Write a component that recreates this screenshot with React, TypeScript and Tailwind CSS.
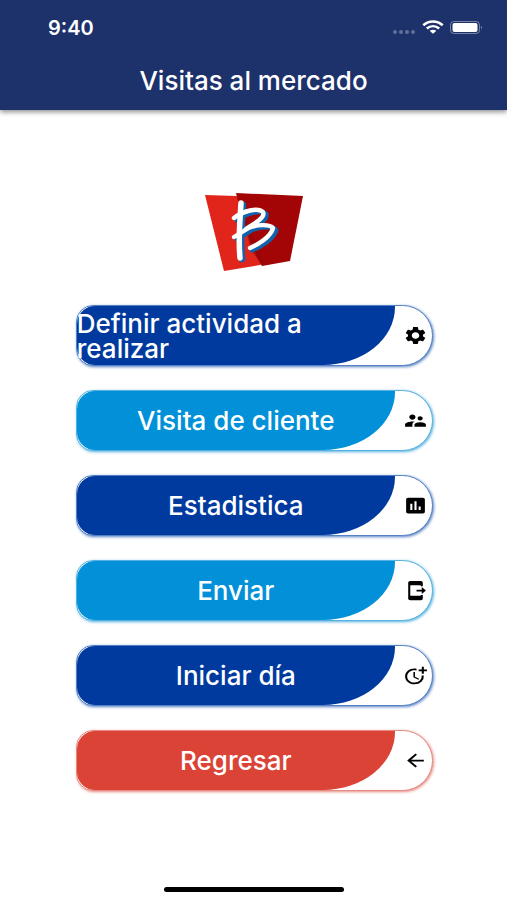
import React from 'react';
import {
  MdArrowBack,
  MdMoreTime,
  MdPoll,
  MdSendToMobile,
  MdSettings,
  MdSupervisorAccount,
} from 'react-icons/md';
import type { IconType } from 'react-icons';
import clsx from 'clsx';

type Tone = 'navy' | 'sky' | 'red';

interface MenuItem {
  label: string;
  icon: IconType;
  tone: Tone;
}

const items: MenuItem[] = [
  { label: 'Definir actividad a realizar', icon: MdSettings, tone: 'navy' },
  { label: 'Visita de cliente', icon: MdSupervisorAccount, tone: 'sky' },
  { label: 'Estadistica', icon: MdPoll, tone: 'navy' },
  { label: 'Enviar', icon: MdSendToMobile, tone: 'sky' },
  { label: 'Iniciar día', icon: MdMoreTime, tone: 'navy' },
  { label: 'Regresar', icon: MdArrowBack, tone: 'red' },
];

const outline: Record<Tone, string> = {
  navy: 'border-[#5580c4] shadow-[1px_1px_3px_#5580c4]',
  sky: 'border-[#55b1df] shadow-[1px_1px_3px_#55b1df]',
  red: 'border-[#e68a82] shadow-[1px_1px_3px_#e68a82]',
};

const fill: Record<Tone, string> = {
  navy: 'bg-[#003a9f]',
  sky: 'bg-[#0291d8]',
  red: 'bg-[#da4336]',
};

const StatusBar: React.FC = () => (
  <div className="flex h-14 items-center justify-between pl-12 pr-6">
    <span className="text-xl font-semibold">9:40</span>
    <svg width="92" height="16" viewBox="0 0 92 16" fill="none">
      {/* no signal */}
      <g fill="#fff" opacity="0.3">
        <circle cx="4" cy="12" r="2" />
        <circle cx="10" cy="12" r="2" />
        <circle cx="16" cy="12" r="2" />
        <circle cx="22" cy="12" r="2" />
      </g>
      {/* wifi */}
      <g stroke="#fff" strokeWidth="2.6">
        <path d="M32.3 5.2 C38 0.2 46 0.2 51.7 5.2" />
        <path d="M35.8 8.6 C39.5 5.4 44.5 5.4 48.2 8.6" />
      </g>
      <path d="M38.6 10.8 Q42 8.6 45.4 10.8 L42 13.8Z" fill="#fff" />
      {/* battery */}
      <rect x="59.5" y="1.5" width="29" height="12" rx="3.5" stroke="#fff" strokeOpacity="0.4" />
      <rect x="61.5" y="3" width="25" height="9" rx="2" fill="#fff" />
      <path d="M90 6 Q92 7.5 90 9Z" fill="#fff" fillOpacity="0.5" />
    </svg>
  </div>
);

const Logo: React.FC = () => (
  <svg width="100" height="80" viewBox="0 0 100 80" fill="none" role="img" aria-label="Logo">
    <path d="M1 3 L33 4 L72 64 L56 73 L20 79Z" fill="#e1251b" />
    <path d="M32 1 L99 4 L86 69 L58 74 L48 56Z" fill="#a30405" />
    <path d="M32 1 L60 72 L58 74 L47 58Z" fill="#8f0607" opacity="0.5" />
    <g stroke="#1263ae" strokeLinecap="round" strokeLinejoin="round" transform="translate(2 1)">
      <path d="M37 12 C36 30 34 48 36 66" strokeWidth="6.5" />
      <path d="M31 27 C40 20 54 16 60 21 C62 27 50 33 43 38 C54 33 67 33 70 37 C68 46 54 54 46 57" strokeWidth="5" />
      <path d="M31 46 L44 38" strokeWidth="5" />
    </g>
    <g stroke="#fff" strokeLinecap="round" strokeLinejoin="round">
      <path d="M37 11 C36 30 34 46 36 66" strokeWidth="5.5" />
      <path d="M30 26 C39 19 54 15 59 20 C62 26 49 32 42 37 C52 32 66 32 69 36 C67 45 53 53 46 56" strokeWidth="4.4" />
      <path d="M30 45 L43 37" strokeWidth="4.4" />
    </g>
  </svg>
);

const MenuButton: React.FC<MenuItem> = ({ label, icon: Icon, tone }) => (
  <button
    type="button"
    className={clsx(
      'flex h-[61px] w-full items-center justify-between rounded-l-[20px] rounded-r-[36px] border bg-white pr-1',
      outline[tone]
    )}
  >
    <span
      className={clsx(
        'flex h-full w-[90.5%] items-center justify-center rounded-l-[18px] rounded-br-[72px_58px] text-left text-[26px]/[25px] font-medium text-white',
        fill[tone]
      )}
    >
      {label}
    </span>
    <Icon className="h-[21px] w-[25px] shrink-0 text-black" preserveAspectRatio="none" />
  </button>
);

export default function App() {
  return (
    <div className="flex min-h-screen flex-col bg-white font-['Inter',sans-serif]">
      <header className="bg-[#1d316a] pb-2 text-white shadow-[0_2px_5px_rgba(0,0,0,0.45)]">
        <StatusBar />
        <h1 className="pt-2 pb-1 text-center text-[26px]/[34px] font-medium">Visitas al mercado</h1>
      </header>

      <main className="flex flex-1 flex-col items-center pt-[82px]">
        <Logo />
        <nav className="mt-[33px] ml-0.5 flex w-[70.5%] flex-col gap-6">
          {items.map((item) => (
            <MenuButton key={item.label} {...item} />
          ))}
        </nav>
      </main>

      {/* Home indicator */}
      <footer className="flex justify-center pb-2">
        <div className="h-[5px] w-[180px] rounded-full bg-black" />
      </footer>
    </div>
  );
}
